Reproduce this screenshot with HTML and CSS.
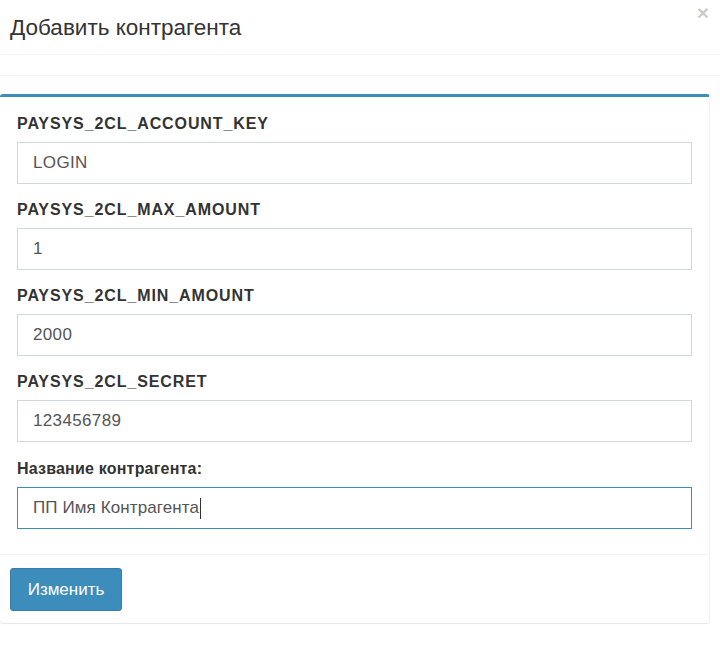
FILE: index.html
```html
<!DOCTYPE html>
<html>
<head>
<meta charset="utf-8">
<link rel="stylesheet" href="styles.css">
</head>
<body>
<div class="modal">
  <div class="modal-header">
    <h4 class="modal-title">Добавить контрагента</h4>
    <span class="close">×</span>
  </div>
  <div class="modal-spacer"></div>
  <div class="box">
    <div class="box-body">
      <div class="form-group">
        <label class="label">PAYSYS_2CL_ACCOUNT_KEY</label>
        <div class="input">LOGIN</div>
      </div>
      <div class="form-group">
        <label class="label">PAYSYS_2CL_MAX_AMOUNT</label>
        <div class="input">1</div>
      </div>
      <div class="form-group">
        <label class="label">PAYSYS_2CL_MIN_AMOUNT</label>
        <div class="input">2000</div>
      </div>
      <div class="form-group">
        <label class="label">PAYSYS_2CL_SECRET</label>
        <div class="input">123456789</div>
      </div>
      <div class="form-group last">
        <label class="label cyr">Название контрагента:</label>
        <div class="input focus cyr">ПП Имя Контрагента<span class="caret"></span></div>
      </div>
    </div>
    <div class="box-footer">
      <button class="btn">Изменить</button>
    </div>
  </div>
</div>
</body>
</html>
```

FILE: styles.css
```css
html, body {
  margin: 0;
  padding: 0;
  background: #fff;
}
body {
  font-family: "Liberation Sans", Arial, sans-serif;
  color: #333;
  width: 720px;
  height: 648px;
  overflow: hidden;
}
.modal {
  width: 720px;
}
.modal-header {
  position: relative;
  height: 55px;
  border-bottom: 1px solid #f4f4f4;
  box-sizing: border-box;
  padding: 0 10px;
  display: flex;
  align-items: center;
}
.modal-title {
  margin: 0;
  font-size: 22.5px;
  font-weight: normal;
  color: #333;
  padding-top: 1px;
}
.close {
  position: absolute;
  right: 11px;
  top: 2px;
  font-size: 21px;
  font-weight: bold;
  color: #000;
  opacity: 0.2;
  line-height: 1;
}
.modal-spacer {
  height: 20px;
  border-bottom: 1px solid #f4f4f4;
}
.box {
  margin-top: 18px;
  width: 710px;
  border-top: 3px solid #3c8dbc;
  border-radius: 3px;
  background: #fff;
  box-shadow: 0 1px 1px rgba(0,0,0,0.1);
  border-right: 1px solid #f4f4f4;
  box-sizing: border-box;
}
.box-body {
  padding: 16px 17px 11px 17px;
}
.form-group {
  margin-bottom: 15px;
}
.form-group.last {
  padding-top: 1px;
  margin-bottom: 14px;
}
.label {
  display: block;
  font-weight: bold;
  font-size: 16px;
  line-height: 21px;
  margin-bottom: 8px;
  color: #333;
  letter-spacing: 0.9px;
}
.input {
  height: 42px;
  box-sizing: border-box;
  border: 1px solid #d2d6de;
  padding: 0 15px;
  display: flex;
  align-items: center;
  font-size: 17px;
  letter-spacing: 0.35px;
  color: #555;
}
.label.cyr {
  letter-spacing: 0.2px;
}
.input.cyr {
  letter-spacing: 0.1px;
}
.input.focus {
  border-color: #3c8dbc;
}
.caret {
  display: inline-block;
  width: 1px;
  height: 21px;
  background: #333;
  margin-left: 1px;
}
.box-footer {
  border-top: 1px solid #f4f4f4;
  padding: 13px 10px 12px 10px;
}
.btn {
  display: block;
  height: 43px;
  width: 112px;
  background: #3c8dbc;
  border: 1px solid #367fa9;
  border-radius: 3px;
  color: #fff;
  font-family: "Liberation Sans", Arial, sans-serif;
  font-size: 17px;
  padding: 0;
}
```
